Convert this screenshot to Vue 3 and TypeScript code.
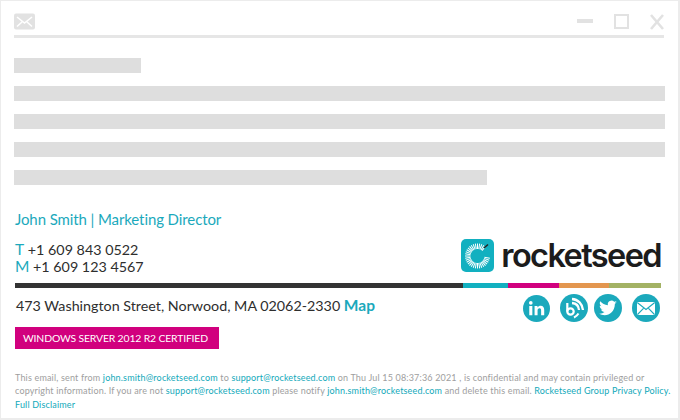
<script setup lang="ts">
const bars: number[] = [127, 651, 651, 651, 473];
const ticks: number[] = Array.from({ length: 36 }, (_, i) => i * 10).filter((a) => a < 45 || a > 95);
</script>

<template>
  <div class="frame">
    <header class="top">
      <svg class="mail" width="21" height="17" viewBox="0 0 21 17">
        <rect width="21" height="16" y="0.5" rx="2" fill="#e2e2e2" />
        <path d="M3 4l7.500 6L18 4M3 13.500l5-4.500M18 13.500l-5-4.500" fill="none" stroke="#fff" stroke-width="1.600" />
      </svg>
      <div class="controls">
        <span class="min"></span>
        <span class="max"></span>
        <svg width="14" height="16" viewBox="0 0 14 16">
          <path d="M1 1l12 14M13 1L1 15" stroke="#e2e2e2" stroke-width="2.600" fill="none" />
        </svg>
      </div>
    </header>

    <div class="bars">
      <div v-for="(w, i) in bars" :key="i" class="bar" :style="{ width: w + 'px' }"></div>
    </div>

    <div class="name">John Smith | Marketing Director</div>

    <div class="contact">
      <div class="phones">
        <div><b>T</b> +1 609 843 0522</div>
        <div><b>M</b> +1 609 123 4567</div>
      </div>
      <div class="logo">
        <svg width="33" height="33" viewBox="0 0 33 33">
          <rect width="33" height="33" rx="5" fill="#12b0c0" />
          <g stroke="#fff" stroke-width="1">
            <line v-for="t in ticks" :key="t" x1="16.500" y1="4.500" x2="16.500" y2="10" :transform="`rotate(${t} 16.500 17)`" />
          </g>
          <path d="M23 9l4-3.500" stroke="#222" stroke-width="1.500" />
        </svg>
        <span>rocketseed</span>
      </div>
    </div>

    <div class="rule">
      <i class="r1"></i><i class="r2"></i><i class="r3"></i><i class="r4"></i><i class="r5"></i>
    </div>

    <div class="address-row">
      <div class="address">473 Washington Street, Norwood, MA 02062-2330 <a>Map</a></div>
      <div class="social">
        <svg width="27" height="27" viewBox="0 0 28 28">
          <circle cx="14" cy="14" r="14" fill="#1ba9bc" />
          <path d="M6.500 11.500h3.200V21H6.500zM12 11.500h3v1.500c.8-1.200 2-1.800 3.300-1.800 2.600 0 3.700 1.700 3.700 4.300V21h-3.200v-5c0-1.300-.5-2.200-1.700-2.200-1.300 0-2 1-2 2.300V21H12z" fill="#fff" />
          <circle cx="8.100" cy="8.200" r="1.900" fill="#fff" />
        </svg>
        <svg width="28" height="28" viewBox="0 0 28 28">
          <circle cx="14" cy="14" r="14" fill="#1ba9bc" />
          <circle cx="10.500" cy="17.500" r="3.200" fill="none" stroke="#fff" stroke-width="2.200" />
          <path d="M7.300 17.500V9" stroke="#fff" stroke-width="2.200" />
          <path d="M12 9c4 .3 6.700 3 7 7M12 5c6 .4 10.500 5 11 11" fill="none" stroke="#fff" stroke-width="2.300" />
          <path d="M14 23.500c2-1 3.500-2.300 4.500-4" fill="none" stroke="#fff" stroke-width="2" />
        </svg>
        <svg class="tw" width="28" height="28" viewBox="0 0 28 28">
          <circle cx="14" cy="14" r="14" fill="#1ba9bc" />
          <path d="M23 8.300c-.7.300-1.400.5-2.100.6.800-.5 1.300-1.200 1.600-2-.7.400-1.500.7-2.300.9a3.700 3.700 0 0 0-6.300 3.400C10.800 11 8.100 9.500 6.300 7.300c-1 1.700-.5 3.800 1.100 4.900-.6 0-1.200-.2-1.700-.5 0 1.800 1.300 3.300 3 3.700-.5.100-1.100.2-1.700.1.500 1.500 1.900 2.500 3.500 2.600A7.500 7.500 0 0 1 5 19.600c6.400 4 15.700.7 15.900-9.800.8-.4 1.500-.9 2.100-1.500z" fill="#fff" />
        </svg>
        <svg width="28" height="28" viewBox="0 0 28 28">
          <circle cx="14" cy="14" r="14" fill="#1ba9bc" />
          <rect x="5" y="8" width="18" height="13" rx="1.500" fill="#fff" />
          <path d="M5.500 8.800L14 15.500l8.500-6.700M5.500 20.500l6-6.200M22.500 20.500l-6-6.200" fill="none" stroke="#1ba9bc" stroke-width="1.100" />
        </svg>
      </div>
    </div>

    <div class="badge">WINDOWS SERVER 2012 R2 CERTIFIED</div>

    <p class="legal">
      This email, sent from <a>john.smith@rocketseed.com</a> to <a>support@rocketseed.com</a> on Thu Jul 15 08:37:36 2021 , is confidential and may contain privileged or<br />
      copyright information. If you are not <a>support@rocketseed.com</a> please notify <a>john.smith@rocketseed.com</a> and delete this email. <a>Rocketseed Group Privacy Policy.</a><br />
      <a>Full Disclaimer</a>
    </p>
  </div>
</template>

<style scoped>
.frame {
  box-sizing: border-box;
  width: 680px;
  height: 420px;
  padding: 12px 14px 0 14px;
  border: 1px solid #ececec;
  border-width: 1px 2px 2px 1px;
  font-family: Lato, "Open Sans", sans-serif;
  color: #2e2e2e;
  background: #fff;
  overflow: hidden;
}
.top {
  display: flex;
  justify-content: space-between;
  height: 22px;
  border-bottom: 3px solid #e6e6e6;
  box-sizing: content-box;
  margin-left: -1px;
}
.controls {
  display: flex;
  gap: 21px;
  align-items: flex-start;
  padding-top: 1px;
}
.min {
  width: 16px;
  height: 4px;
  margin-top: 5px;
  background: #e2e2e2;
}
.max {
  box-sizing: border-box;
  width: 15px;
  height: 15px;
  border: 2px solid #e2e2e2;
}
.bars {
  display: flex;
  flex-direction: column;
  gap: 13px;
  margin: 20px 0 0 -1px;
}
.bar {
  height: 15px;
  background: #dedede;
}
.name {
  margin-top: 25px;
  font-size: 15px;
  line-height: 18px;
  color: #1ba9bc;
  letter-spacing: -0.100px;
}
.contact {
  display: flex;
  justify-content: space-between;
  align-items: flex-end;
  margin-top: 11px;
  height: 36px;
}
.phones {
  font-size: 14.300px;
  line-height: 17px;
}
.phones div {
  height: 17px;
}
.phones b {
  font-weight: 400;
  font-size: 15.500px;
  line-height: 1;
  color: #1ba9bc;
}
.logo {
  display: flex;
  align-items: center;
  gap: 7px;
  margin: 0 3px 3px 0;
  font-family: Inter, sans-serif;
  font-size: 32.500px;
  font-weight: 600;
  letter-spacing: -1.600px;
  color: #1c1c1c;
  line-height: 33px;
}
.rule {
  display: flex;
  width: 646px;
  margin: 8px 0 0;
  height: 5px;
}
.rule i {
  display: block;
  flex: none;
}
.r1 { width: 448px; background: #333; }
.r2 { width: 45px; background: #12b0c0; }
.r3 { width: 51px; background: #d1007e; }
.r4 { width: 50px; background: #e3964f; }
.r5 { width: 52px; background: #a3b264; }
.address-row {
  display: flex;
  justify-content: space-between;
  height: 30px;
  margin-top: 3px;
}
.address {
  font-size: 14.300px;
  line-height: 28px;
  margin-left: 1px;
}
.address a {
  color: #1ba9bc;
  font-weight: 700;
  font-size: 15.500px;
}
.social {
  display: flex;
  gap: 10px;
  align-items: center;
  align-self: flex-start;
  margin: 3px 4px 0 0;
}
.social .tw {
  margin-left: -4px;
}
.badge {
  width: 204px;
  height: 22px;
  margin-top: 6px;
  background: #d1007e;
  color: #fff;
  font-size: 10.400px;
  line-height: 22px;
  padding-left: 8px;
  box-sizing: border-box;
  white-space: nowrap;
  letter-spacing: -0.150px;
}
.legal {
  margin: 21.500px 0 0;
  font-size: 9px;
  line-height: 13.500px;
  color: #9e9e9e;
  white-space: nowrap;
  letter-spacing: 0.170px;
}
.legal a { color: #12a9ba; }
</style>
